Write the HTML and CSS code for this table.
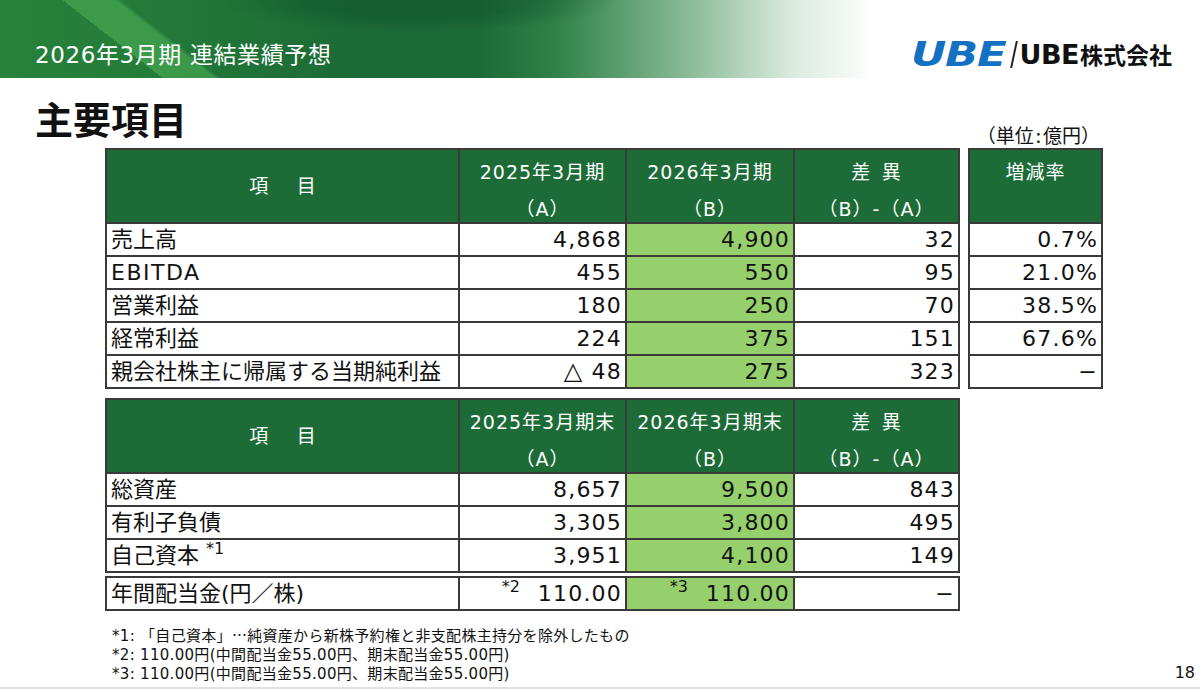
FILE: index.html
```html
<!DOCTYPE html>
<html lang="ja">
<head>
<meta charset="utf-8">
<title>2026年3月期 連結業績予想</title>
<link rel="stylesheet" href="styles.css">
</head>
<body>
<div class="page">
  <header class="band">
    <h1 class="band-title">2026年3月期 連結業績予想</h1>
    <div class="logo">
      <span class="logo-mark">UBE</span>
      <span class="logo-slash"></span>
      <span class="logo-name"><span class="logo-ube">UBE</span>株式会社</span>
    </div>
  </header>

  <div class="title-row">
    <h2 class="page-title">主要項目</h2>
    <div class="unit">（単位<span class="colon">:</span>億円）</div>
  </div>

  <div class="tables">
    <div class="row-group">
      <div class="grid grid-main">
        <div class="hd hd-item">項&emsp;&ensp;目</div>
        <div class="hd"><span>2025年3月期</span><span>（A）</span></div>
        <div class="hd"><span>2026年3月期</span><span>（B）</span></div>
        <div class="hd"><span>差&ensp;異</span><span>（B）-（A）</span></div>

        <div class="c">売上高</div>
        <div class="c num">4,868</div>
        <div class="c num hl">4,900</div>
        <div class="c num">32</div>

        <div class="c"><span class="latin">EBITDA</span></div>
        <div class="c num">455</div>
        <div class="c num hl">550</div>
        <div class="c num">95</div>

        <div class="c">営業利益</div>
        <div class="c num">180</div>
        <div class="c num hl">250</div>
        <div class="c num">70</div>

        <div class="c">経常利益</div>
        <div class="c num">224</div>
        <div class="c num hl">375</div>
        <div class="c num">151</div>

        <div class="c">親会社株主に帰属する当期純利益</div>
        <div class="c num"><span class="tri">△</span> 48</div>
        <div class="c num hl">275</div>
        <div class="c num">323</div>
      </div>

      <div class="grid grid-rate">
        <div class="hd"><span>増減率</span></div>
        <div class="c num">0.7%</div>
        <div class="c num">21.0%</div>
        <div class="c num">38.5%</div>
        <div class="c num">67.6%</div>
        <div class="c num">−</div>
      </div>
    </div>

    <div class="grid grid-main grid-bs">
      <div class="hd hd-item">項&emsp;&ensp;目</div>
      <div class="hd"><span>2025年3月期末</span><span>（A）</span></div>
      <div class="hd"><span>2026年3月期末</span><span>（B）</span></div>
      <div class="hd"><span>差&ensp;異</span><span>（B）-（A）</span></div>

      <div class="c">総資産</div>
      <div class="c num">8,657</div>
      <div class="c num hl">9,500</div>
      <div class="c num">843</div>

      <div class="c">有利子負債</div>
      <div class="c num">3,305</div>
      <div class="c num hl">3,800</div>
      <div class="c num">495</div>

      <div class="c">自己資本 <span class="mark">*1</span></div>
      <div class="c num">3,951</div>
      <div class="c num hl">4,100</div>
      <div class="c num">149</div>
    </div>

    <div class="grid grid-main grid-div">
      <div class="c">年間配当金(円／株)</div>
      <div class="c num"><span class="mark mark-gap">*2</span>110.00</div>
      <div class="c num hl"><span class="mark mark-gap">*3</span>110.00</div>
      <div class="c num">−</div>
    </div>
  </div>

  <footer class="footer">
    <div class="notes">
      <p>*1: 「自己資本」<span class="cjk">…</span>純資産から新株予約権と非支配株主持分を除外したもの</p>
      <p>*2: 110.00円(中間配当金55.00円、期末配当金55.00円)</p>
      <p>*3: 110.00円(中間配当金55.00円、期末配当金55.00円)</p>
    </div>
    <div class="page-num">18</div>
  </footer>
  <div class="bottom-line"></div>
</div>
</body>
</html>
```

FILE: styles.css
```css
* {
  box-sizing: border-box;
  margin: 0;
  padding: 0;
}

html, body {
  width: 1200px;
  height: 689px;
  overflow: hidden;
  background: #ffffff;
}

body {
  font-family: "DejaVu Sans", "Noto Sans CJK JP", sans-serif;
  color: #111111;
}

.page {
  height: 689px;
  display: flex;
  flex-direction: column;
}

/* ---------- header band ---------- */
.band {
  height: 78px;
  flex: none;
  display: flex;
  align-items: flex-end;
  justify-content: space-between;
  padding: 0 28px 9px 35px;
  background:
    radial-gradient(ellipse 200px 32px at 420px 0, rgba(12, 70, 34, 0.35) 0 55%, rgba(12, 70, 34, 0) 100%),
    linear-gradient(38deg, rgba(40, 130, 55, 0.2) 0 100px, rgba(80, 180, 88, 0.55) 100px 132px, rgba(0, 0, 0, 0) 136px),
    linear-gradient(90deg, #27823b 0%, #227839 15%, #1c6a35 30%, #1d6b36 40%, #2f7f47 46%, #4d9561 50%, #8fbe9b 58%, #dbeadf 66%, #ffffff 73%);
}

.band-title {
  font-size: 23px;
  font-weight: 400;
  line-height: 28px;
  letter-spacing: 0.6px;
  color: #ffffff;
}

.logo {
  display: flex;
  align-items: center;
  height: 30px;
}

.logo-mark {
  display: inline-block;
  font-family: "DejaVu Sans", sans-serif;
  font-weight: 700;
  font-style: italic;
  font-size: 34px;
  line-height: 30px;
  letter-spacing: -1px;
  color: #1470c2;
  transform: scaleX(1.28);
  transform-origin: left center;
  margin-right: 28px;
}

.logo-slash {
  display: inline-block;
  width: 1.5px;
  height: 27px;
  background: #222222;
  transform: skewX(-12deg);
  margin-right: 5px;
}

.logo-name {
  font-family: "Noto Sans CJK JP", sans-serif;
  font-weight: 700;
  font-size: 23px;
  line-height: 30px;
  color: #111111;
  white-space: nowrap;
}

.logo-ube {
  font-family: "DejaVu Sans", sans-serif;
  font-weight: 700;
  font-size: 27px;
  letter-spacing: -0.5px;
  margin-right: 1px;
}

/* ---------- title row ---------- */
.title-row {
  height: 70px;
  flex: none;
  display: flex;
  align-items: flex-end;
  justify-content: space-between;
  padding: 0 100px 3px 35px;
}

.page-title {
  font-family: "Noto Sans CJK JP", sans-serif;
  font-size: 38px;
  font-weight: 700;
  line-height: 44px;
  margin-bottom: 5px;
  color: #111111;
}

.unit {
  font-family: "Noto Sans CJK JP", sans-serif;
  font-size: 19px;
  line-height: 20px;
}

.colon {
  margin: 0 2px;
}

/* ---------- tables ---------- */
.tables {
  padding-left: 105px;
  flex: none;
}

.row-group {
  display: flex;
  gap: 8px;
  align-items: flex-start;
}

.grid {
  display: grid;
  gap: 2px;
  padding: 2px;
  background: #3a3a3a;
  grid-template-rows: 72px repeat(5, 31px);
  width: max-content;
}

.grid-main {
  grid-template-columns: 351px 165px 166px 163px;
}

.grid-rate {
  grid-template-columns: 131px;
}

.grid-bs {
  grid-template-rows: 72px repeat(3, 31px);
  margin-top: 9px;
}

.grid-div {
  grid-template-rows: 31px;
  margin-top: 3px;
}

.hd {
  background: #1d6b36;
  color: #ffffff;
  font-size: 19px;
  letter-spacing: 1px;
  line-height: 37px;
  padding-top: 4px;
  display: flex;
  flex-direction: column;
  align-items: center;
  white-space: nowrap;
}

.hd-item {
  justify-content: center;
  padding-top: 0;
  letter-spacing: 0;
}

.c {
  background: #ffffff;
  font-size: 22px;
  line-height: 31px;
  padding: 0 3px 0 4px;
  white-space: nowrap;
  overflow: hidden;
}

.num {
  text-align: right;
  letter-spacing: 1.2px;
  padding-right: 3px;
}

.hl {
  background: #96d06c;
}

.latin {
  letter-spacing: 1.5px;
}

.tri {
  font-size: 24px;
}

.mark {
  font-size: 16px;
  letter-spacing: 0;
  line-height: 1;
  vertical-align: 9px;
}

.mark-gap {
  margin-right: 18px;
}

/* ---------- footer ---------- */
.footer {
  flex: none;
  display: flex;
  justify-content: space-between;
  align-items: flex-end;
  padding: 14px 5px 0 112px;
}

.notes {
  font-size: 15px;
  line-height: 19px;
  letter-spacing: 0.3px;
}

.cjk {
  font-family: "Noto Sans CJK JP", sans-serif;
}

.page-num {
  font-size: 16px;
  line-height: 19px;
  padding-bottom: 2px;
}

.bottom-line {
  margin-top: auto;
  height: 2px;
  background: #e2e2e2;
  flex: none;
}
```
